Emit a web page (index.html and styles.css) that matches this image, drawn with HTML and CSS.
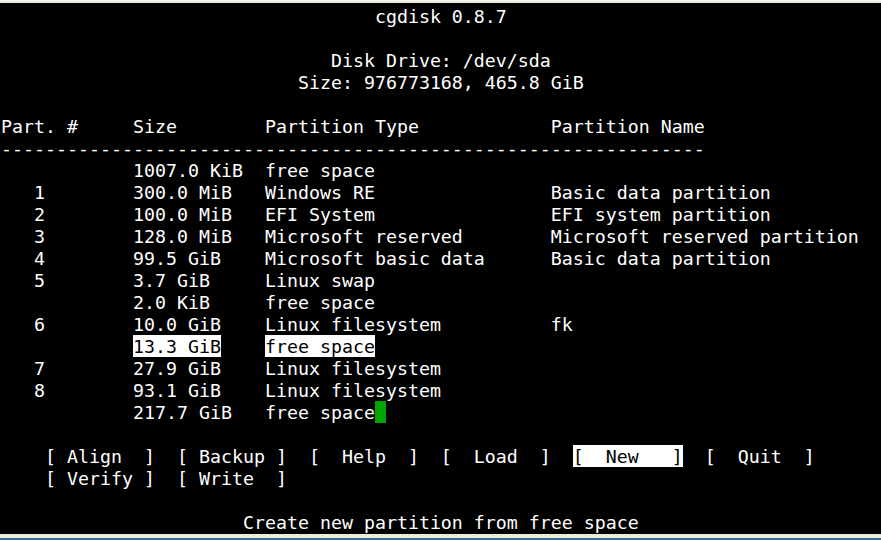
FILE: index.html
```html
<!DOCTYPE html>
<html>
<head>
<meta charset="utf-8">
<title>cgdisk 0.8.7</title>
<link rel="stylesheet" href="styles.css">
</head>
<body>
<div class="frame-top"></div>
<div class="screen">
<div class="row">                                  cgdisk 0.8.7</div>
<div class="row"> </div>
<div class="row">                              Disk Drive: /dev/sda</div>
<div class="row">                           Size: 976773168, 465.8 GiB</div>
<div class="row"> </div>
<div class="row">Part. #     Size        Partition Type            Partition Name</div>
<div class="row">----------------------------------------------------------------</div>
<div class="row">            1007.0 KiB  free space</div>
<div class="row">   1        300.0 MiB   Windows RE                Basic data partition</div>
<div class="row">   2        100.0 MiB   EFI System                EFI system partition</div>
<div class="row">   3        128.0 MiB   Microsoft reserved        Microsoft reserved partition</div>
<div class="row">   4        99.5 GiB    Microsoft basic data      Basic data partition</div>
<div class="row">   5        3.7 GiB     Linux swap</div>
<div class="row">            2.0 KiB     free space</div>
<div class="row">   6        10.0 GiB    Linux filesystem          fk</div>
<div class="row">            <span class="hl">13.3 GiB</span>    <span class="hl">free space</span></div>
<div class="row">   7        27.9 GiB    Linux filesystem</div>
<div class="row">   8        93.1 GiB    Linux filesystem</div>
<div class="row">            217.7 GiB   free space<span class="cursor"> </span></div>
<div class="row"> </div>
<div class="row">    [ Align  ]  [ Backup ]  [  Help  ]  [  Load  ]  <span class="hl">[  New   ]</span>  [  Quit  ]</div>
<div class="row">    [ Verify ]  [ Write  ]</div>
<div class="row"> </div>
<div class="row">                      Create new partition from free space</div>
</div>
<div class="frame-bottom"></div>
<div class="taskbar"></div>
</body>
</html>
```
FILE: styles.css
```css
html, body {
  margin: 0;
  padding: 0;
  background: #000;
  overflow: hidden;
}
body {
  width: 881px;
  height: 540px;
  display: flex;
  flex-direction: column;
}
.frame-top {
  height: 3px;
  background: #ecebd8;
  border-top: 1px solid #f6f5ea;
  box-sizing: border-box;
  flex: none;
}
.screen {
  flex: none;
  height: 531px;
  box-sizing: border-box;
  padding: 2px 0 1px 1px;
  background: #000;
  color: #fff;
  font-family: "DejaVu Sans Mono", monospace;
  font-size: 18.27px;
  line-height: 22px;
}
.row {
  height: 21px;
  padding-top: 1px;
  white-space: pre;
}
.hl {
  background: #fff;
  color: #000;
  padding-top: 1px;
}
.cursor {
  background: #00a600;
  padding-top: 1px;
}
.frame-bottom {
  flex: none;
  height: 4px;
  background: #ecebd8;
}
.taskbar {
  flex: 1;
  background: #3b6a9c;
}
```
